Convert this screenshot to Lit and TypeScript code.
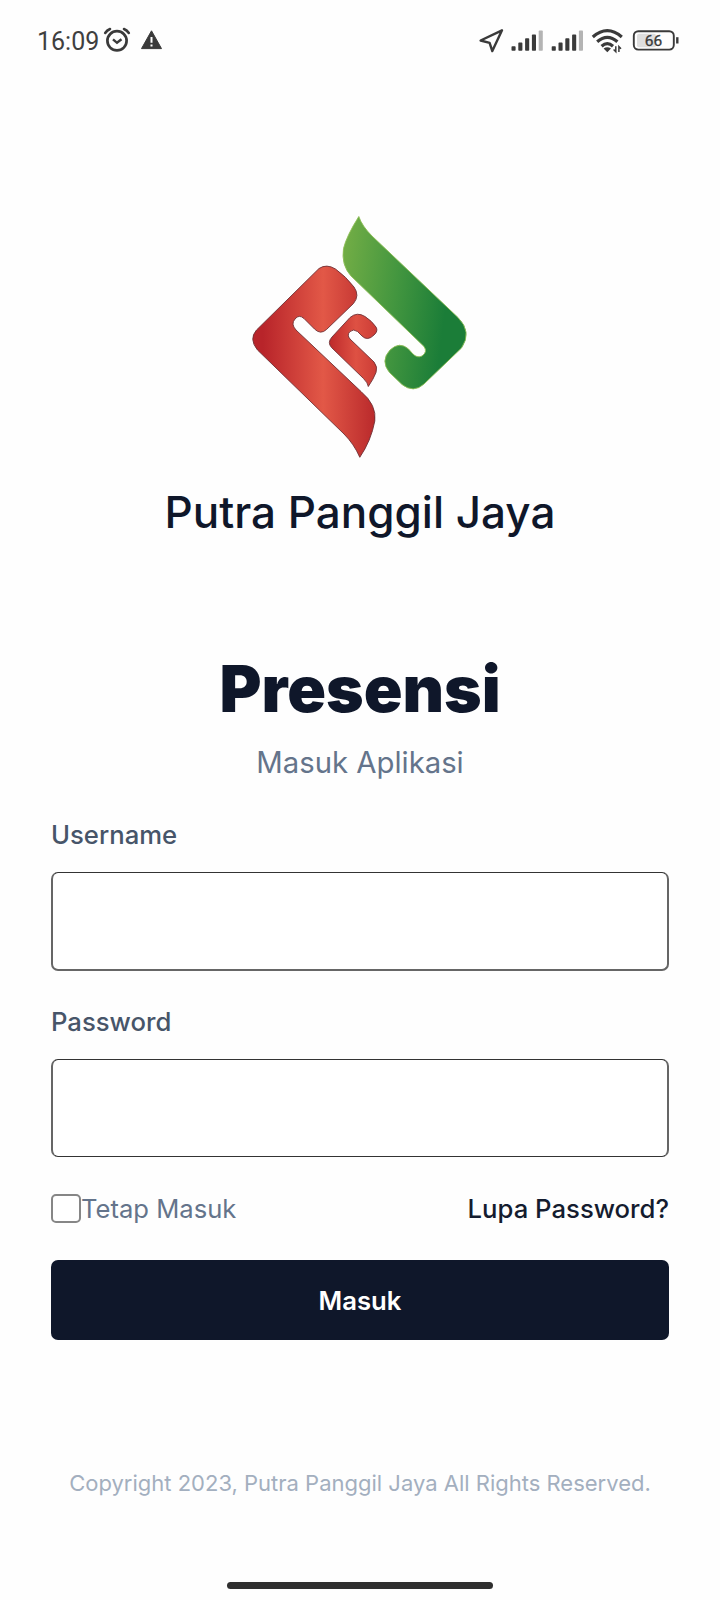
import { LitElement, html, css, svg } from "lit";
import { customElement } from "lit/decorators.js";

@customElement("status-bar")
class StatusBar extends LitElement {
  static styles = css`
    :host { display: flex; justify-content: space-between; height: 80px; }
    .time { font: 400 25px/84px Roboto, sans-serif; color: #3f3f3f; padding-left: 37px; width: 65px; white-space: nowrap; }
    .left { display: flex; height: 80px; }
    svg { display: block; }
    .level { font: 400 15.5px Roboto, sans-serif; }
  `;
  bars(x: number) {
    return [0, 1, 2, 3, 4].map(
      (i) => svg`<rect x=${x + i * 6.8} y=${[46.3, 42.6, 38.3, 34.6, 30.6][i]} width="4.1" height=${[4.4, 8.1, 12.4, 16.1, 20.1][i]} rx="0.8" fill=${i === 4 ? "#b4b4b4" : "#3a3a3a"} />`
    );
  }
  render() {
    return html`
      <div class="left">
        <div class="time">16:09</div>
        <svg width="68" height="80" viewBox="102 0 68 80" fill="none" stroke="#3a3a3a">
          <circle cx="117" cy="40.8" r="9.6" stroke-width="2.7" />
          <path d="M113 39.3L117 42.8L121.5 39.3" stroke-width="2.4" />
          <path d="M105.2 33Q107 30.2 110 29M128.8 33Q127 30.2 124 29" stroke-width="2.6" stroke-linecap="round" />
          <path d="M151.5 30.8L161.5 48.6H141.5Z" fill="#3a3a3a" stroke-width="1" stroke-linejoin="round" />
          <path d="M151.5 37V42.8M151.5 44.6V46.6" stroke="#fff" stroke-width="2" />
        </svg>
      </div>
      <svg width="250" height="80" viewBox="470 0 250 80">
        <path d="M502 30.3L480.6 40.5L489.6 42.9L492.3 51Z" fill="none" stroke="#3a3a3a" stroke-width="2.4" stroke-linejoin="round" />
        ${this.bars(511.5)} ${this.bars(551.7)}
        <g fill="none" stroke="#3a3a3a" stroke-width="3.2">
          <path d="M592.8 37Q607.3 24.4 621.8 37" />
          <path d="M597.2 41.8Q607.3 32.8 617.4 41.8" />
          <path d="M601.6 46.2Q607.3 41 613 46.2" />
        </g>
        <path d="M603.6 48.6Q607.3 45.7 611 48.6L607.3 52.2Z" fill="#3a3a3a" />
        <path d="M615.8 46.2V51.7L613.6 49.5M618.9 52V46.5L621 48.7" fill="none" stroke="#3a3a3a" stroke-width="1.5" />
        <rect x="637" y="33.8" width="19" height="13.5" rx="2" fill="#dedede" />
        <rect x="633.8" y="31.2" width="40" height="18.4" rx="4.5" fill="none" stroke="#3a3a3a" stroke-width="1.9" />
        <path d="M677.3 37.2V43.5" stroke="#3a3a3a" stroke-width="2.4" />
        <text class="level" x="653.5" y="46.2" text-anchor="middle" fill="#3a3a3a" stroke="#3a3a3a" stroke-width="0.3">66</text>
      </svg>
    `;
  }
}

@customElement("brand-logo")
class BrandLogo extends LitElement {
  static styles = css`:host, svg { display: block; }`;
  render() {
    return html`
      <svg width="240" height="260" viewBox="240 206 240 260">
        <defs>
          <linearGradient id="red" x1="253" y1="0" x2="376" y2="0" gradientUnits="userSpaceOnUse">
            <stop offset="0.08" stop-color="#b8242a" />
            <stop offset="0.57" stop-color="#e25847" />
            <stop offset="1" stop-color="#b9292b" />
          </linearGradient>
          <linearGradient id="small" x1="329" y1="0" x2="378" y2="0" gradientUnits="userSpaceOnUse">
            <stop offset="0" stop-color="#bd292b" />
            <stop offset="0.55" stop-color="#de5143" />
            <stop offset="1" stop-color="#cb3b35" />
          </linearGradient>
          <linearGradient id="green" x1="343" y1="270" x2="452" y2="284" gradientUnits="userSpaceOnUse">
            <stop offset="0" stop-color="#70ac45" />
            <stop offset="0.5" stop-color="#43963f" />
            <stop offset="0.97" stop-color="#1b7d38" />
          </linearGradient>
        </defs>
        <path fill="url(#red)" stroke="#6f3034" stroke-width="0.9"
          d="M319 268.5Q326.5 263.5 335.5 269Q346 276.5 354 287Q360 295.5 353.5 303.5L326.5 329.5Q320.5 335 314.5 329L304 318.5Q299 314 295 319Q290.5 324 296 330L361 391.5Q377 405 374.8 421Q371 441 359.8 457.3Q354 444 344 434L257.5 350Q248.5 339 256.5 330Z" />
        <path fill="url(#small)" stroke="#6f3034" stroke-width="0.9"
          d="M350 317.5Q357 311.5 365 316.5Q372 321 376 327Q378.500 331 374 335Q367.5 341.5 362 336L357.5 331.5Q353.5 328.5 350 331.5Q346.5 335 350 339L374 362Q378 367 376 372.5Q373.5 379 368.3 386.5Q368 383 363.5 378.5L331.5 347.5Q327 342.5 332 337Z" />
        <path fill="url(#green)" stroke="#8cbd55" stroke-width="0.9"
          d="M358.8 216.5Q362 226 372 236L458 317.5Q472.5 332 461.5 348L424 384Q413.5 393.5 402 384.5L389.5 372.5Q380 361 390 350Q399.5 341 408.5 349L412.5 353.5Q417 358.5 422 356Q427.8 352 424 346.5L351 276Q341 265 343.5 248.5Q346.5 236 358.8 216.5Z" />
      </svg>
    `;
  }
}

@customElement("app-root")
class AppRoot extends LitElement {
  static styles = css`
    :host { display: block; height: 1600px; overflow: hidden; background: #fefefe; font-family: Inter, sans-serif; color: #0f172a; }
    .page { height: 1600px; display: flex; flex-direction: column; }
    brand-logo { margin: 126px auto 0; }
    .company { text-align: center; font-size: 44px; font-weight: 500; line-height: 64px; margin-top: 14px; }
    .title { margin: 105px 0 0; text-align: center; font-size: 64px; font-weight: 900; line-height: 80px; }
    .sub { text-align: center; font-size: 29.3px; line-height: 44px; color: #64748b; margin-top: 12px; }
    form { display: flex; flex-direction: column; padding: 0 51px; margin-top: 27px; }
    label { font-size: 25.7px; font-weight: 500; line-height: 36px; color: #475569; height: 55px; padding-top: 5px; }
    .field { box-sizing: border-box; width: 618px; height: 99px; border: solid #666; border-width: 1px 2px 2px; border-top-color: #333; border-radius: 7px; background: #fff; padding: 0 20px; font: inherit; outline: none; }
    .second { margin-top: 28px; }
    .pass { height: 98px; border-bottom: 1px solid #333; }
    .row { display: flex; justify-content: space-between; align-items: center; margin-top: 33px; height: 36px; font-size: 25.6px; }
    .keep { display: flex; align-items: center; color: #64748b; }
    .check { appearance: none; margin: 0; width: 30px; height: 29px; box-sizing: border-box; border: 2px solid #868686; border-radius: 5px; background: #fff; }
    .forgot { font-size: 25.7px; font-weight: 500; color: #141c2f; }
    .submit { height: 80px; margin-top: 34px; padding: 0; border: 0; border-radius: 7px; background: #0f172a; color: #fff; font: 600 25.7px Inter, sans-serif; }
    .copy { text-align: center; font-size: 22px; line-height: 32px; color: #a3afbf; margin-top: 127px; }
    .home { width: 266px; height: 7px; border-radius: 4px; background: #2f2f2f; margin: auto auto 11px; }
  `;
  render() {
    return html`
      <div class="page">
        <status-bar></status-bar>
        <brand-logo></brand-logo>
        <div class="company">Putra Panggil Jaya</div>
        <h1 class="title">Presensi</h1>
        <div class="sub">Masuk Aplikasi</div>
        <form>
          <label for="user">Username</label>
          <input class="field" id="user" type="text" />
          <label class="second" for="pass">Password</label>
          <input class="field pass" id="pass" type="password" />
          <div class="row">
            <span class="keep"><input class="check" type="checkbox" />Tetap Masuk</span>
            <span class="forgot">Lupa Password?</span>
          </div>
          <button class="submit" type="button">Masuk</button>
        </form>
        <div class="copy">Copyright 2023, Putra Panggil Jaya All Rights Reserved.</div>
        <div class="home"></div>
      </div>
    `;
  }
}
